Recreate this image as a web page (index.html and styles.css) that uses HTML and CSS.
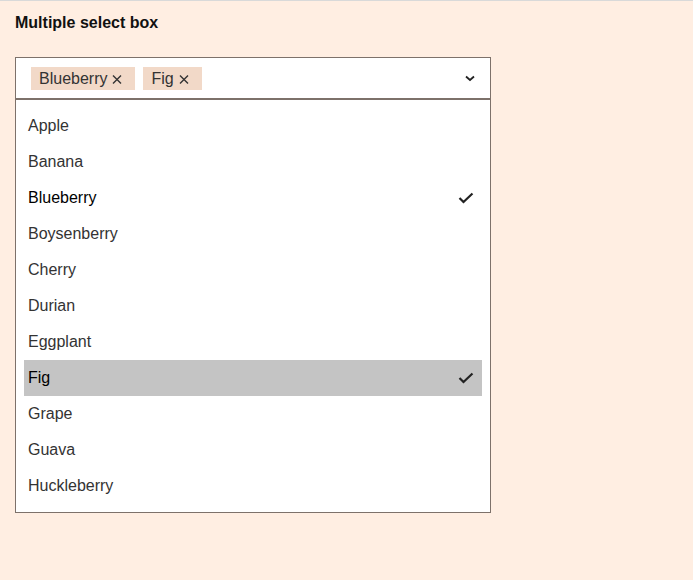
FILE: index.html
```html
<!DOCTYPE html>
<html>
<head>
<meta charset="utf-8">
<link rel="stylesheet" href="styles.css">
</head>
<body>
<div class="page">
  <div class="title">Multiple select box</div>
  <div class="select">
    <div class="control">
      <div class="tags">
        <span class="tag">Blueberry<svg class="x" width="10" height="9" viewBox="0 0 10 9"><path d="M1 0.5 L9 8.5 M9 0.5 L1 8.5" stroke="#333" stroke-width="1.4" fill="none"/></svg></span>
        <span class="tag">Fig<svg class="x" width="10" height="9" viewBox="0 0 10 9"><path d="M1 0.5 L9 8.5 M9 0.5 L1 8.5" stroke="#333" stroke-width="1.4" fill="none"/></svg></span>
      </div>
      <svg class="chev" width="10" height="7" viewBox="0 0 10 7"><path d="M1 1.5 L5 5 L9 1.5" fill="none" stroke="#222" stroke-width="1.8"/></svg>
    </div>
    <ul class="list">
      <li class="opt">Apple</li>
      <li class="opt">Banana</li>
      <li class="opt sel">Blueberry<svg class="check" width="16" height="12" viewBox="0 0 16 12"><path d="M1.5 6 L5.5 10 L14.5 1.5" fill="none" stroke="#222" stroke-width="2.2"/></svg></li>
      <li class="opt">Boysenberry</li>
      <li class="opt">Cherry</li>
      <li class="opt">Durian</li>
      <li class="opt">Eggplant</li>
      <li class="opt sel active">Fig<svg class="check" width="16" height="12" viewBox="0 0 16 12"><path d="M1.5 6 L5.5 10 L14.5 1.5" fill="none" stroke="#222" stroke-width="2.2"/></svg></li>
      <li class="opt">Grape</li>
      <li class="opt">Guava</li>
      <li class="opt">Huckleberry</li>
    </ul>
  </div>
</div>
</body>
</html>
```
FILE: styles.css
```css
html, body {
  margin: 0;
  padding: 0;
  background: #ffeee2;
  height: 100%;
}
body {
  border-top: 1px solid #d9d9d9;
  box-sizing: border-box;
  font-family: "Liberation Sans", Arial, sans-serif;
}
.page {
  padding: 13px 15px;
}
.title {
  font-size: 16px;
  font-weight: bold;
  color: #111;
  line-height: 18px;
  margin-bottom: 25px;
}
.select {
  width: 476px;
  box-sizing: border-box;
  border: 1px solid #7d716a;
  background: #fff;
}
.control {
  height: 40px;
  display: flex;
  align-items: center;
  justify-content: space-between;
  padding: 0 15px 0 15px;
  border-bottom: 2px solid #7d716a;
}
.tags {
  display: flex;
  gap: 8px;
}
.tag {
  background: #f2d9c8;
  color: #333;
  font-size: 16px;
  line-height: 23px;
  height: 23px;
  padding: 0 13px 0 8px;
  display: inline-flex;
  align-items: center;
}
.x {
  display: block;
  margin-left: 5px;
  margin-top: 2px;
}
.chev {
  display: block;
  margin-top: 1px;
}
.list {
  list-style: none;
  margin: 0;
  padding: 8px;
}
.opt {
  height: 36px;
  display: flex;
  align-items: center;
  justify-content: space-between;
  padding: 0 8px 0 4px;
  font-size: 16px;
  color: #333;
}
.opt.sel {
  color: #000;
}
.opt.active {
  background: #c4c4c4;
}
.check {
  display: block;
}
```
